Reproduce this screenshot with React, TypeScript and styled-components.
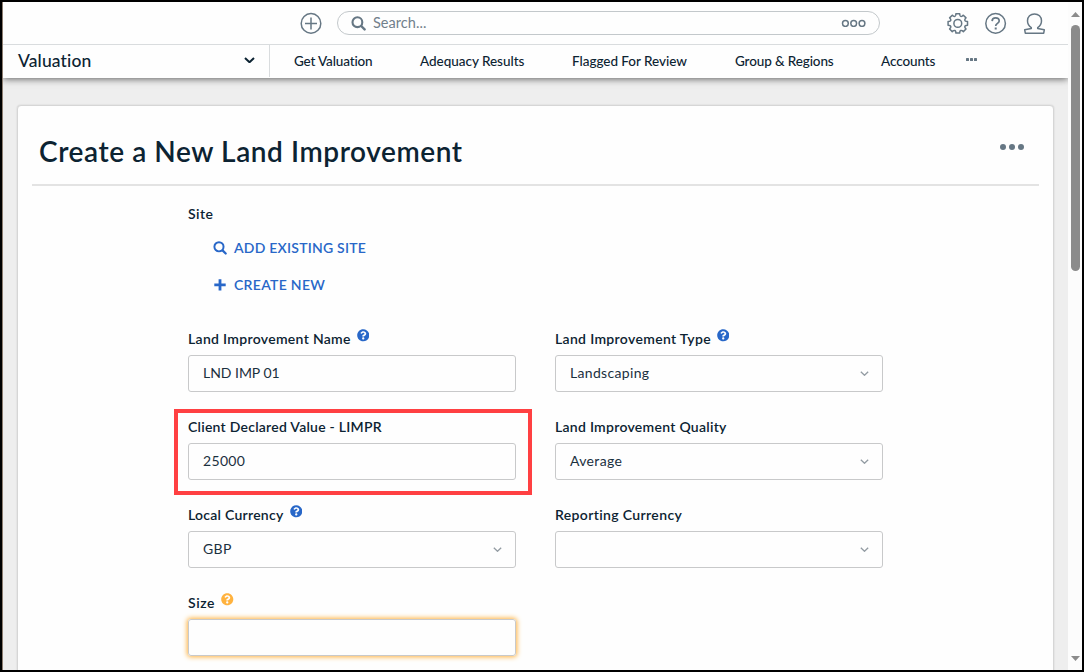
import React from "react";
import styled, { createGlobalStyle } from "styled-components";
import { FaQuestionCircle } from "react-icons/fa";

const slate = "#667784";
const ink = "#0c2332";
const blue = "#2867c8";
const amber = "#ffb23e";

const GlobalStyle = createGlobalStyle`
  *, *::before, *::after { box-sizing: border-box; }
  body { margin: 0; overflow: hidden; }
  svg { display: block; flex: none; }
`;

const Frame = styled.div`
  display: flex;
  width: 1084px;
  height: 672px;
  overflow: hidden;
  border: 2px solid #000;
  background: #fefefe;
  color: ${ink};
  font-family: Lato, "Open Sans", sans-serif;
  font-variant-ligatures: none;
`;

const Viewport = styled.div`
  display: flex;
  flex-direction: column;
  width: 1066px;
  height: 668px;
  overflow: hidden;
  border-left: 1px solid #8c7d70;
`;

const TopBar = styled.header`
  position: relative;
  z-index: 2;
  display: flex;
  flex: none;
  align-items: center;
  height: 43px;
  padding-left: 297px;
  border-bottom: 1px solid #d9dcde;
  background: #fefefe;
`;

const SearchBox = styled.div`
  display: flex;
  align-items: center;
  width: 543px;
  height: 24px;
  margin: 0 67px 0 15px;
  padding: 0 13px;
  border: 1px solid #c3c8cb;
  border-radius: 12px;
`;

const SearchHint = styled.span`
  flex: 1;
  margin-left: 7px;
  color: #71808b;
  font-size: 14.5px;
  line-height: 20px;
  letter-spacing: 0.05px;
`;

const TopActions = styled.div`
  display: flex;
  align-items: center;
  gap: 16px;
`;

const NavBar = styled.nav`
  position: relative;
  z-index: 1;
  display: flex;
  flex: none;
  align-items: flex-start;
  height: 33px;
  background: #fefefe;
  box-shadow: 0 1px 7px rgba(0, 0, 0, 0.6);
`;

const ModulePicker = styled.div`
  display: flex;
  align-items: center;
  justify-content: space-between;
  width: 267px;
  height: 32px;
  padding: 0 14px 2px 15px;
  border-right: 1px solid #d9dcde;
  font-size: 17.5px;
  font-weight: 500;
  letter-spacing: 0.12px;
`;

const NavLinks = styled.div`
  display: flex;
  align-items: center;
  height: 32px;
  padding-left: 24px;
`;

const NavLink = styled.span<{ $width: number; $track: number }>`
  width: ${(p) => p.$width}px;
  white-space: nowrap;
  font-size: 13.5px;
  font-weight: 500;
  line-height: 20px;
  letter-spacing: ${(p) => p.$track}px;
`;

const Page = styled.main`
  flex: 1;
  min-height: 0;
  padding: 27px 14px 0;
  background: #eee;
`;

const Card = styled.section`
  width: 1037px;
  height: 640px;
  border: 1px solid #d6d6d6;
  border-radius: 4px;
  background: #fefefe;
  box-shadow: 0 0 2px rgba(0, 0, 0, 0.14);
`;

const CardHeader = styled.div`
  display: flex;
  align-items: center;
  justify-content: space-between;
  height: 80px;
  margin: 0 14px;
  padding: 12px 15px 0 7px;
  border-bottom: 2px solid #e3e3e3;
`;

const Title = styled.h1`
  margin: 0;
  font-size: 28px;
  font-weight: 600;
  line-height: 34px;
  letter-spacing: 0.58px;
`;

const MenuDots = styled.div`
  display: flex;
  gap: 3px;
  margin-bottom: 8px;
`;

const MenuDot = styled.i`
  width: 6px;
  height: 6px;
  border-radius: 50%;
  background: ${slate};
`;

const NavDots = styled.div`
  display: flex;
  gap: 1px;
  margin-bottom: 3px;
`;

const NavDot = styled.i`
  width: 3px;
  height: 3px;
  border-radius: 0.5px;
  background: ${slate};
`;

const Form = styled.div`
  padding: 18px 170px 0;
`;

const Label = styled.div<{ $track: number }>`
  display: flex;
  height: 20px;
  font-size: 14px;
  font-weight: 600;
  line-height: 20px;
  letter-spacing: ${(p) => p.$track}px;
  white-space: nowrap;
`;

const SiteLinks = styled.div`
  display: flex;
  flex-direction: column;
  gap: 17px;
  margin: 14px 0 34px 25px;
`;

const SiteLink = styled.a<{ $track: number }>`
  display: flex;
  align-items: center;
  gap: 7px;
  height: 20px;
  color: ${blue};
  font-size: 14px;
  font-weight: 600;
  line-height: 20px;
  letter-spacing: ${(p) => p.$track}px;
`;

const Fields = styled.div`
  display: grid;
  grid-template-columns: 328px 328px;
  gap: 25px 39px;
`;

const FieldBox = styled.div`
  position: relative;
  display: flex;
  flex-direction: column;
  gap: 6px;
`;

const Highlight = styled.div`
  position: absolute;
  inset: -8px -16px -15px -14px;
  border: 4px solid #ff4042;
`;

const Control = styled.div<{ $focus?: boolean; $track: number }>`
  display: flex;
  align-items: center;
  justify-content: space-between;
  height: 37px;
  padding: 0 13px 0 14px;
  border: 1px solid #c8c9ca;
  border-radius: 3px;
  box-shadow: ${(p) => (p.$focus ? `0 0 5px 1px ${amber}` : "none")};
  color: #1b303e;
  font-size: 14px;
  line-height: 20px;
  letter-spacing: ${(p) => p.$track}px;
`;

const ControlText = styled.span`
  padding-bottom: 2px;
`;

const Help = styled(FaQuestionCircle)<{ $tone: string }>`
  margin-left: 6px;
  color: ${(p) => p.$tone};
`;

const ScrollTrack = styled.div`
  display: flex;
  flex-direction: column;
  align-items: center;
  width: 14px;
  padding: 10px 1px 9px 2px;
  background: #fcfcfc;
`;

const ScrollThumb = styled.div`
  width: 9px;
  height: 246px;
  margin: 8px 0 auto;
  border-radius: 5px;
  background: #8b8b8b;
`;

const Magnifier = ({ size, color }: { size: number; color: string }) => (
  <svg width={size} height={size} viewBox="0 0 15 15" fill="none" stroke={color}>
    <circle cx="6.4" cy="6.2" r="4.9" strokeWidth="2.1" />
    <path d="M10.2 10l3.4 3.4" strokeWidth="2.4" strokeLinecap="round" />
  </svg>
);

const PlusCircle = () => (
  <svg width="22" height="22" viewBox="0 0 22 22" fill="none" stroke={slate} strokeWidth="1.5">
    <circle cx="11" cy="11.4" r="9.8" />
    <path d="M11 5.4v12M5 11.4h12" />
  </svg>
);

const ScopeRings = () => (
  <svg width="25" height="8" viewBox="0 0 25 8" fill="none" stroke={slate} strokeWidth="1.5">
    <circle cx="4.4" cy="4.5" r="2.9" />
    <circle cx="12.7" cy="4.5" r="2.9" />
    <circle cx="21" cy="4.5" r="2.9" />
  </svg>
);

const teeth = [0, 1, 2, 3, 4, 5, 6, 7];
const polar = (r: number, deg: number) => {
  const a = (deg * Math.PI) / 180;
  return `${(10.8 + r * Math.sin(a)).toFixed(2)} ${(11.4 - r * Math.cos(a)).toFixed(2)}`;
};
const gearPath =
  teeth
    .map((n) => {
      const a = n * 45;
      return `${n ? "L" : "M"}${polar(9.9, a - 11)}L${polar(9.9, a + 11)}L${polar(8.5, a + 14)}Q${polar(6.9, a + 22.5)} ${polar(8.5, a + 31)}`;
    })
    .join("") + "Z";

const Gear = () => (
  <svg width="22" height="22" viewBox="0 0 22 22" fill="none" stroke={slate} strokeWidth="1.5" strokeLinejoin="round">
    <path d={gearPath} />
    <circle cx="10.8" cy="11.4" r="3.9" />
  </svg>
);

const HelpCircle = () => (
  <svg width="22" height="22" viewBox="0 0 22 22" fill="none" stroke={slate} strokeWidth="1.5">
    <circle cx="10.6" cy="11.4" r="9.8" />
    <path d="M7.1 9.1C7.2 7 8.6 5.9 10.6 5.9s3.6 1.1 3.6 3c0 2.5-3.5 2.4-3.5 5.1" strokeWidth="1.7" />
    <path d="M10.7 15.5v2" strokeWidth="2" />
  </svg>
);

const Person = () => (
  <svg width="22" height="22" viewBox="0 0 22 22" fill="none" stroke={slate} strokeWidth="1.5" strokeLinejoin="round">
    <path d="M8.3 15.7C5.9 14.1 4.5 11.7 4.5 8.8c0-4.1 3-6.9 7-6.9s7 2.8 7 6.9c0 2.9-1.4 5.3-3.8 6.9v.9l6.6 1.2-.6 3.4H2.3l-.6-3.4 6.6-1.2z" />
  </svg>
);

const Chevron = ({ width, color, stroke }: { width: number; color: string; stroke: number }) => (
  <svg width={width} height={width * 0.6} viewBox="0 0 10 6" fill="none" stroke={color} strokeWidth={stroke}>
    <path d="M.9.9L5 4.8 9.1.9" />
  </svg>
);

const PlusMark = () => (
  <svg width="14" height="14" viewBox="0 0 14 14" fill="none" stroke={blue} strokeWidth="2.8">
    <path d="M7 1.2v11.2M1.3 6.8h11.4" />
  </svg>
);

const ScrollArrow = ({ down }: { down?: boolean }) => (
  <svg width="9" height="5" viewBox="0 0 9 5" fill="#8b8b8b">
    <path d={down ? "M0 0h9L4.5 5z" : "M0 5h9L4.5 0z"} />
  </svg>
);

type FieldProps = {
  label: string;
  labelTrack: number;
  value?: string;
  valueTrack?: number;
  help?: string;
  select?: boolean;
  focus?: boolean;
  marked?: boolean;
};

const Field = ({ label, labelTrack, value, valueTrack = 0.33, help, select, focus, marked }: FieldProps) => (
  <FieldBox>
    {marked && <Highlight />}
    <Label $track={labelTrack}>
      {label}
      {help && <Help $tone={help} size={12.5} />}
    </Label>
    <Control $focus={focus} $track={valueTrack}>
      <ControlText>{value}</ControlText>
      {select && <Chevron width={9} color="#929ba2" stroke={1.4} />}
    </Control>
  </FieldBox>
);

export default function App() {
  return (
    <>
      <GlobalStyle />
      <Frame>
        <Viewport>
          <TopBar>
            <PlusCircle />
            <SearchBox>
              <Magnifier size={15} color={slate} />
              <SearchHint>Search...</SearchHint>
              <ScopeRings />
            </SearchBox>
            <TopActions>
              <Gear />
              <HelpCircle />
              <Person />
            </TopActions>
          </TopBar>
          <NavBar>
            <ModulePicker>
              Valuation
              <Chevron width={11} color={ink} stroke={1.8} />
            </ModulePicker>
            <NavLinks>
              <NavLink $width={126} $track={-0.15}>Get Valuation</NavLink>
              <NavLink $width={152} $track={-0.03}>Adequacy Results</NavLink>
              <NavLink $width={163} $track={-0.03}>Flagged For Review</NavLink>
              <NavLink $width={146} $track={-0.12}>Group &amp; Regions</NavLink>
              <NavLink $width={84.5} $track={-0.1}>Accounts</NavLink>
              <NavDots><NavDot /><NavDot /><NavDot /></NavDots>
            </NavLinks>
          </NavBar>
          <Page>
            <Card>
              <CardHeader>
                <Title>Create a New Land Improvement</Title>
                <MenuDots><MenuDot /><MenuDot /><MenuDot /></MenuDots>
              </CardHeader>
              <Form>
                <Label $track={0.45}>Site</Label>
                <SiteLinks>
                  <SiteLink $track={0.22}><Magnifier size={14} color={blue} />ADD EXISTING SITE</SiteLink>
                  <SiteLink $track={0.3}><PlusMark />CREATE NEW</SiteLink>
                </SiteLinks>
                <Fields>
                  <Field label="Land Improvement Name" labelTrack={0.31} value="LND IMP 01" valueTrack={-0.03} help={blue} />
                  <Field label="Land Improvement Type" labelTrack={0.33} value="Landscaping" help={blue} select />
                  <Field label="Client Declared Value - LIMPR" labelTrack={0.25} value="25000" marked />
                  <Field label="Land Improvement Quality" labelTrack={0.28} value="Average" select />
                  <Field label="Local Currency" labelTrack={0.26} value="GBP" help={blue} select />
                  <Field label="Reporting Currency" labelTrack={0.36} select />
                  <Field label="Size" labelTrack={0.6} help={amber} focus />
                </Fields>
              </Form>
            </Card>
          </Page>
        </Viewport>
        <ScrollTrack>
          <ScrollArrow />
          <ScrollThumb />
          <ScrollArrow down />
        </ScrollTrack>
      </Frame>
    </>
  );
}
